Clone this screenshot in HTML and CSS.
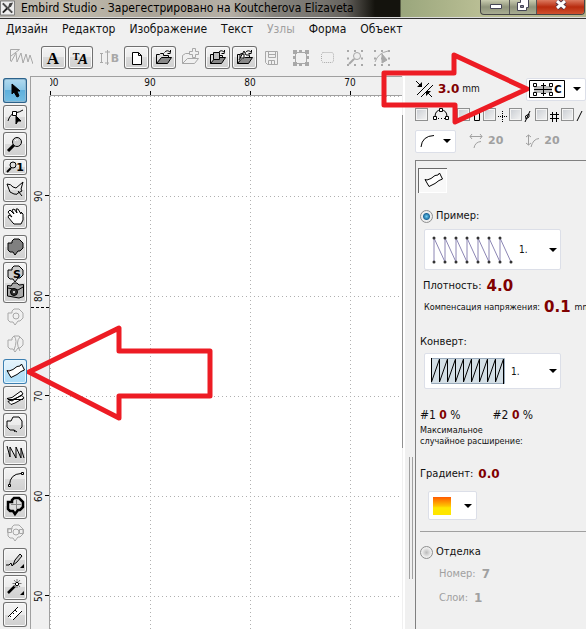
FILE: index.html
```html
<!DOCTYPE html>
<html lang="ru">
<head>
<meta charset="utf-8">
<title>Embird Studio</title>
<link rel="stylesheet" href="styles.css">
</head>
<body>
<svg class="defs" aria-hidden="true">
  <defs>
    <pattern id="dots" width="100" height="100" patternUnits="userSpaceOnUse">
      <path d="M0 .5H100M.5 0V100" stroke="#b0b0b0" stroke-dasharray="1 3" fill="none"/>
    </pattern>
    <linearGradient id="fire" x2="0" y2="1"><stop offset="0" stop-color="#ff5a00"/><stop offset=".5" stop-color="#ffc400"/><stop offset=".6" stop-color="#ffe600"/><stop offset="1" stop-color="#ffe600"/></linearGradient>
    <symbol id="blob" viewBox="0 0 24 25"><path d="M5 8H9V6L11 4H16L20 8V13L17 16H15L12 20L10 17H7L5 15Z"/></symbol>
    <symbol id="flag" viewBox="0 0 24 25"><path d="M4 11.500L6 12L10 10.500L14 7.500L17 7L18.500 5L21.500 11L18 12.500L14 15.500L11 17L8 18.500Z"/></symbol>
    <symbol id="folder" viewBox="0 0 25 23"><path d="M5.500 17.500V8.500H8.500L9.500 7.500H12.500V9.500H17.500V11.500" fill="#ddd"/><path d="M5.500 17.500L10.500 11.500H20.500L16.500 17.500Z" fill="#888"/><path d="M13.500 6.500Q16 3 19.500 6.500V4M19.500 7.500H16.500" fill="none"/></symbol>
    <symbol id="caret" viewBox="0 0 8 4"><path d="M0 0H8L4 4Z" fill="#000" stroke="none"/></symbol>
  </defs>
</svg>

<header class="titlebar">
  <svg class="logo" viewBox="0 0 16 16"><path fill="#eee" stroke="#777" d="M.5.5H15.500V15.500H.5Z"/><path d="M3 3L13 13M3 13L8 8" stroke="#222" stroke-width="2"/><path d="M8 9L10 3L14 2L12 6Z" fill="#444"/><path d="M3 3L13 13" stroke="#bbb" stroke-width=".6"/></svg>
  <h1>Embird Studio - Зарегестрировано на Koutcherova Elizaveta</h1>
  <div class="winbtns">
    <button class="min" aria-label="Minimize"><svg viewBox="0 0 28 15"><path d="M9.500 4.500H20.500V8.500H9.500Z" fill="#fff" stroke="#445"/></svg></button>
    <button class="max" aria-label="Restore"><svg viewBox="0 0 26 15"><path d="M10.500 -.5H18.500V7.500H16.500V10.500H7.500V2.500H10.500Z" fill="#fff" stroke="#445"/><path d="M10.500 5.500H13.500V7.500H10.500Z" fill="#889" stroke="#445"/></svg></button>
    <button class="close" aria-label="Close"><svg viewBox="0 0 47 15"><path d="M20 1L28 8M28 1L20 8" stroke="#534" stroke-width="5"/><path d="M20 1L28 8M28 1L20 8" stroke="#fff" stroke-width="3"/></svg></button>
  </div>
</header>

<nav class="menu">
  <button>Дизайн</button><button>Редактор</button><button>Изображение</button><button>Текст</button><button disabled>Узлы</button><button>Форма</button><button>Объект</button>
</nav>

<div class="toolbar" role="toolbar" aria-label="Файл">
  <button class="wide" disabled aria-label="Стежки"><svg viewBox="0 0 25 23"><path d="M2.500 15V3.500H11.500L3 10M3 16L8 7L9 16L13 7L15 17L18 8L20 16L22 9L25 18"/></svg></button>
  <div class="group">
    <button aria-label="Шрифт"><svg viewBox="0 0 25 23"><text class="serif" x="12" y="18" font-size="17">A</text></svg></button>
    <button aria-label="Надпись"><svg viewBox="0 0 25 23"><text class="serif" x="8" y="14" font-size="10">T</text><text class="serif ital" x="15" y="18" font-size="15">A</text></svg></button>
    <button disabled aria-label="Интервал"><svg viewBox="0 0 25 23"><path d="M6.500 7V17M5 7.500H8M5 16.500H8M12.500 4V19M10 6H15M10 17H14"/><text x="20" y="16" font-size="11">B</text></svg></button>
  </div>
  <div class="group">
    <button aria-label="Новый"><svg viewBox="0 0 25 23"><path d="M8.500 6.500H14.500L17.500 9.500V18.500H8.500ZM14.500 6.500V9.500H17.500" fill="#fff"/></svg></button>
    <button aria-label="Открыть"><svg viewBox="0 0 25 23"><use href="#folder"/></svg></button>
    <button disabled aria-label="Добавить"><svg viewBox="0 0 25 23"><path d="M4.500 17.500V9.500L7.500 7.500H11M4.500 17.500L9.500 12.500H20.500L16.500 17.500ZM14.500 2.500H17.500V5.500H20.500V8.500H17.500V11.500H14.500V8.500H11.500V5.500H14.500Z"/></svg></button>
    <button aria-label="Импорт"><svg viewBox="0 0 25 23"><use href="#folder"/><path d="M8.500 6.500H14.500V13.500H8.500Z" fill="#bbb"/></svg></button>
    <button aria-label="Импорт векторов"><svg viewBox="0 0 25 23"><use href="#folder"/><path d="M7 14L12 5L14 9H18M8 8H12V12H8Z" fill="#fff"/></svg></button>
    <button disabled aria-label="Сохранить"><svg viewBox="0 0 25 23"><path d="M6.500 5.500H18.500V18.500H8.500L6.500 16.500ZM9.500 5.500V11.500H16.500V5.500M9.500 18V14.500H15.500V18M12.500 15V18M9 8.500H16"/></svg></button>
  </div>
  <div class="group">
    <button disabled aria-label="Выделение"><svg viewBox="0 0 25 23"><path d="M7.500 6.500H18.500V17.500H7.500Z"/><path d="M5 4h4v4h-4ZM11 4h3v3h-3ZM17 4h4v4h-4ZM5 16h4v4h-4ZM11 17h3v3h-3ZM17 16h4v4h-4ZM5 10h3v3h-3ZM18 10h3v3h-3Z" class="solid" stroke="none"/></svg></button>
    <button disabled aria-label="Рамка"><svg viewBox="0 0 25 23"><rect x="6.500" y="6.500" width="12" height="10" rx="2" stroke-dasharray="1 1"/></svg></button>
    <button disabled aria-label="Масштаб"><svg viewBox="0 0 25 23"><path d="M5 12.500H21M5 5H21M5 19H21" stroke-width="2" stroke-dasharray="2 5"/><circle cx="15" cy="10" r="3.500" fill="#eee"/><path d="M12 13L7 18" stroke-width="2"/></svg></button>
    <button disabled aria-label="Узлы контура"><svg viewBox="0 0 25 23"><path d="M5 12.500H21M5 5H21M5 19H21" stroke-width="2" stroke-dasharray="2 5"/><path d="M6 16Q9 7 19 5"/><path d="M13 8V17L18 14Z" class="solid"/></svg></button>
  </div>
</div>

<main class="work">
  <div class="tools" role="toolbar" aria-label="Инструменты">
    <button class="on" aria-label="Выбор"><svg viewBox="0 0 24 25"><path d="M9 6V16L11 14L14 19L16 18L14 13H17Z" fill="#000"/></svg></button>
    <button aria-label="Правка узлов"><svg viewBox="0 0 24 25"><path d="M5 16Q7 9 12 8T20 5" /><path d="M9.500 6.500H13.500V10.500H9.500Z" fill="#fff"/><path d="M13 11V19L15 16H18Z" fill="#000"/></svg></button>
    <button aria-label="Лупа"><svg viewBox="0 0 24 25"><path d="M11 13L5 19" stroke-width="3"/><circle cx="14" cy="10" r="4.500" fill="#ccc"/><path d="M12 9Q13 7 15 8" stroke="#fff"/></svg></button>
    <button class="short" aria-label="Масштаб 1"><svg viewBox="0 0 24 16"><path d="M8 9L4 13" stroke-width="2"/><circle cx="10" cy="6" r="3" fill="#ddd"/><text x="17" y="12" font-size="11">1</text></svg></button>
    <button aria-label="Лассо"><svg viewBox="0 0 24 25"><path d="M4 7Q8 7 10 10L13 11L20 5L18 12L19 14L15 16Q15 18 11 17L7 15ZM15 14L19 19"/></svg></button>
    <button class="last" aria-label="Рука"><svg viewBox="0 0 24 25"><path d="M10 19L5 13L6 11L9 13L5 8L7 6L11 10L9 6L11 5L14 9L13 5L15 5L18 10L18 8L20 10V16L18 20H11Z" fill="#fff"/></svg></button>
    <button aria-label="Форма"><svg viewBox="0 0 24 25"><use href="#blob" fill="#808080"/></svg></button>
    <button class="tall" aria-label="Стиль и снимок"><svg viewBox="0 0 24 41"><use href="#blob" width="24" height="25" fill="#ccc"/><text x="14" y="16" font-size="11">S</text><path d="M4.500 23.500L8 24L10 21H14L16 23L20.500 22.500V34.500L16 36L4.500 34Z" fill="#aaa"/><path d="M5 26L15 28L20 25" /><circle cx="11" cy="30" r="3.500" fill="#333"/><circle cx="11" cy="30" r="1" fill="#fff" stroke="none"/></svg></button>
    <button disabled aria-label="Отверстие"><svg viewBox="0 0 24 25"><use href="#blob"/><circle cx="13" cy="11" r="3"/></svg></button>
    <button disabled aria-label="Разрез"><svg viewBox="0 0 24 25"><use href="#blob"/><path d="M11 4Q15 8 11 18M17 5Q12 10 17 19"/></svg></button>
    <button class="lit" aria-label="Столбик"><svg viewBox="0 0 24 25"><use href="#flag" fill="#fff"/></svg></button>
    <button aria-label="Столбик с проёмом"><svg viewBox="0 0 24 25"><path d="M4 12.500L9 11.500L18 5L20 8L9 15ZM8 18.500L12 17L21 12L19 9.500L5 15.500Z" fill="#fff"/><path d="M5 13.500H20"/></svg></button>
    <button aria-label="Контур"><svg viewBox="0 0 24 25"><path d="M12 19L11 17H7L4 14V8H8L10 4H16L19 8V14L17 16M11 17L14 19"/></svg></button>
    <button aria-label="Зигзаг"><svg viewBox="0 0 24 25"><path d="M4 6L7 17V7L13 18V7L18 18V8L21 18"/></svg></button>
    <button aria-label="Кривая"><svg viewBox="0 0 24 25"><path d="M6.500 18Q7 7 18 6.500"/><path d="M5.500 17.500h2v2h-2ZM18.500 5.500h2v2h-2Z" fill="#fff"/></svg></button>
    <button aria-label="Аппликация"><svg viewBox="0 0 24 25"><use href="#blob" fill="#ddd" stroke-width="2.500"/><path d="M8 10.500H18M13.500 6V16" stroke="#888"/></svg></button>
    <button disabled aria-label="Узор"><svg viewBox="0 0 24 25"><use href="#blob"/><circle cx="13" cy="11" r="3"/><path d="M4.500 7.500h4v4h-4ZM16.500 8.500h4v4h-4Z"/></svg></button>
    <button aria-label="Карандаш"><svg viewBox="0 0 24 25"><path d="M3 17H6L8 15L9 18L11 16"/><path d="M10 17L12 12L17 6L19 8L14 14Z" fill="#ccc"/><path d="M17 20H21V16Z" fill="#000" stroke="none"/></svg></button>
    <button aria-label="Волшебная палочка"><svg viewBox="0 0 24 25"><path d="M5 18L12 11" stroke-width="2.500"/><path d="M14 4V13M9.500 8.500H18.500M11 5L17 12M17 5L11 12" stroke="#777"/><path d="M12 9L14 7L16 9L14 11Z" fill="#fff"/><path d="M17 20H21V16Z" fill="#000" stroke="none"/></svg></button>
    <button aria-label="Линейка"><svg viewBox="0 0 24 25"><path d="M5 15L15 5L19 9L10 18Z" fill="#fff" stroke="none"/><path d="M5 15L15 5M10 18L19 9M7 14L8 15M10 11L11 12M12 8L14 10"/></svg></button>
  </div>

  <section class="stage" aria-label="Холст">
    <div class="corner"></div>
    <div class="ruler-x"><span>100</span><span>90</span><span>80</span><span>70</span></div>
    <div class="ruler-y"><span></span><span>90</span><span>80</span><span>70</span><span>60</span><span>50</span><i class="cursor"></i></div>
    <svg class="canvas"><rect width="100%" height="100%" fill="url(#dots)"/></svg>
  </section>

  <aside class="side">
    <div class="line width-line">
      <svg width="18" height="18" viewBox="0 0 18 18" class="ico"><path d="M2 15L14 3M6 17L18 5M1 1L6 6M17 17L12 12"/><path d="M7 7V2L2 7ZM11 11V16L16 11Z" fill="#000" stroke="none"/></svg>
      <b class="num">3.0</b><span class="unit">mm</span>
      <button class="box align" aria-haspopup="listbox" aria-label="Выравнивание"><svg width="36" height="18" viewBox="0 0 36 18" class="ico"><path d="M.5.5H35.500V17.500H.5Z" fill="#fff"/><path d="M5 6H23V13H5Z" fill="#bbb" stroke="none"/><path d="M5 9.500H23M14.500 3V16M12 5.500H17M12 13.500H17"/><path d="M4.500 3.500h3v3h-3ZM20.500 3.500h3v3h-3ZM4.500 12.500h3v3h-3ZM20.500 12.500h3v3h-3Z" fill="#fff"/><text x="29" y="13" font-size="10">C</text></svg><svg class="caret"><use href="#caret"/></svg></button>
    </div>
    <div class="checks">
      <label><input type="checkbox" aria-label="Дуга"><svg class="ico" width="18" height="14" viewBox="0 0 18 14"><path d="M3 9Q3 2 9 2T15 9" /><path d="M3 10.500H15" stroke-dasharray="1 2"/><path d="M1.500 8.500h3v3h-3ZM13.500 8.500h3v3h-3ZM7.500 .5h3v3h-3Z" fill="#fff"/></svg></label>
      <label><input type="checkbox" aria-label="Прямоугольник"><svg class="ico" width="9" height="14" viewBox="0 0 9 14"><path d="M2.500 4.500H7.500V12.500H2.500Z"/></svg></label>
      <label><input type="checkbox" aria-label="Оси"><svg class="ico" width="10" height="14" viewBox="0 0 10 14"><path d="M4.500 3V14M0 8.500H10" stroke-dasharray="1 1"/></svg></label>
      <label><input type="checkbox" aria-label="Касательная"><svg class="ico" width="7" height="14" viewBox="0 0 7 14"><path d="M1 14L6 3M1.500 8L5 6V9L2 11Z"/></svg></label>
      <label><input type="checkbox" aria-label="Сетка"><svg class="ico" width="9" height="14" viewBox="0 0 9 14"><path d="M2.500 4V14M6.500 4V14M0 6.500H9M0 10.500H9"/></svg></label>
      <label><input type="checkbox" aria-label="Линия"><svg class="ico" width="9" height="14" viewBox="0 0 9 14"><path d="M1 13L6 3"/></svg></label>
    </div>
    <div class="line corner-line">
      <button class="box curve" aria-haspopup="listbox" aria-label="Кривая"><svg class="ico" width="15" height="14" viewBox="0 0 15 14"><path d="M1 13Q2 2 14 1.500"/></svg><svg class="caret"><use href="#caret"/></svg></button>
      <svg class="ico dim" width="14" height="16" viewBox="0 0 14 16"><path d="M1 3.500H13M3 1L1 3.500L3 6M11 1L13 3.500L11 6M5 15Q6 9 12 8.500"/></svg><b class="dimnum first">20</b>
      <svg class="ico dim" width="14" height="16" viewBox="0 0 14 16"><path d="M3.500 2V12M1 4L3.500 2L6 4M1 10L3.500 12L6 10M6 14Q8 6 14 5.500"/></svg><b class="dimnum">20</b>
    </div>

    <div class="lower">
      <div class="grip"></div>
      <form class="panel">
        <button type="button" class="toggle" aria-pressed="true" aria-label="Столбик"><svg class="ico" width="24" height="25" viewBox="0 0 24 25"><use href="#flag" fill="#fff"/></svg></button>
        <label class="row sample"><input type="radio" name="mode" checked>Пример:</label>
        <div class="combo stitch">
          <select aria-label="Пример"><option>1.</option></select>
          <svg class="ico" width="82" height="30" viewBox="0 0 82 30"><path d="M3 27V3L14 27V3L25 27V3L36 27V3L47 27V3L58 27V3L69 27V3L80 27" stroke="#8c86b4"/><path d="M3 27h0M3 3h0M14 27h0M14 3h0M25 27h0M25 3h0M36 27h0M36 3h0M47 27h0M47 3h0M58 27h0M58 3h0M69 27h0M69 3h0M80 27h0" stroke="#333" stroke-width="3" stroke-linecap="round"/></svg>
          <svg class="caret"><use href="#caret"/></svg>
        </div>
        <div class="row density">Плотность:<b class="num big">4.0</b></div>
        <div class="row comp"><small>Компенсация напряжения:</small><b class="num big">0.1</b><small>mm</small></div>
        <label class="row envelope" for="env">Конверт:</label>
        <div class="combo env">
          <select id="env"><option>1.</option></select>
          <svg class="ico" width="74" height="26" viewBox="0 0 74 26"><path d="M.5.5H73.500V25.500H.5Z" fill="#d4dfe6" stroke="#9ab"/><path d="M.5 0V24L8.500 1V24L16.500 1V24L24.500 1V24L32.500 1V24L40.500 1V24L48.500 1V24L56.500 1V24L64.500 1V24L72.500 1V26"/></svg>
          <svg class="caret"><use href="#caret"/></svg>
        </div>
        <div class="row percent"><span>#1 <b>0</b> %</span><span>#2 <b>0</b> %</span></div>
        <p class="note">Максимальное<br>случайное расширение:</p>
        <div class="row gradient">Градиент:<b class="num">0.0</b></div>
        <button type="button" class="box fill" aria-haspopup="listbox" aria-label="Градиент"><svg width="18" height="18" viewBox="0 0 18 18"><rect width="18" height="18" fill="url(#fire)"/></svg><svg class="caret"><use href="#caret"/></svg></button>
        <hr>
        <label class="row finish"><input type="radio" name="mode">Отделка</label>
        <div class="row off">Номер:<b>7</b></div>
        <div class="row off">Слои:<b>1</b></div>
      </form>
    </div>
  </aside>
</main>

<svg class="callout to-tool" width="186" height="100" viewBox="0 0 186 100"><path d="M2 49L92 5V28H183V73H92V95Z"/></svg>
<svg class="callout to-align" width="148" height="74" viewBox="0 0 148 74"><path d="M3 22H73V4L146 38L74 71V54H3Z"/></svg>
</body>
</html>
```

FILE: styles.css
```css
* { box-sizing: border-box; }

body {
  margin: 0;
  height: 100vh;
  display: flex;
  flex-direction: column;
  position: relative;
  overflow: hidden;
  background: #f0f0f0;
  color: #111;
  font: 11px/20px "DejaVu Sans Condensed", "DejaVu Sans", sans-serif;
}

button {
  padding: 0;
  border: 0;
  background: none;
  color: inherit;
  font: inherit;
}

svg { display: block; flex: none; }
svg text { font-weight: bold; text-anchor: middle; fill: #000; stroke: none; font-family: "DejaVu Sans", sans-serif; }
svg .serif { font-family: "Liberation Serif", serif; }
svg .ital { font-style: italic; }
.defs { position: absolute; width: 0; height: 0; }
.ico { fill: none; stroke: #000; }

/* Title bar */
.titlebar {
  flex: none;
  display: flex;
  height: 19px;
  background: linear-gradient(90deg, #b5b2ab 0, #c4beb0 60px, #aaa498 150px, #b6b0a6 230px, #85827c 275px, #77746f 320px, #66635e 345px, #14130d 375px, #14130d 400px, #9aa67c 401px, #b9be94 480px, #b6b58d 100%);
  border-bottom: 1px solid #333;
  box-shadow: inset 0 -1px #ddd;
}
.logo { width: 15px; height: 16px; }
h1 { flex: 1; margin: 0 0 0 6px; font-size: 12px; line-height: 16px; font-weight: normal; color: #000; white-space: nowrap; }
.winbtns {
  display: flex;
  height: 15px;
  margin-right: 1px;
  border: 1px solid #444;
  border-top: 0;
  border-radius: 0 0 4px 4px;
  overflow: hidden;
  background: linear-gradient(#c9ccb0, #8e937a 50%, #a9ad92);
}
.winbtns svg { height: 15px; }
.min svg { width: 28px; }
.max svg { width: 26px; }
.close svg { width: 47px; }
.max { border: solid #555; border-width: 0 1px; }
.close { background: linear-gradient(#dc7a60, #b82b0e 50%, #d0512f); }

/* Menu */
.menu { flex: none; display: flex; align-items: flex-start; gap: 14px; height: 23px; padding: 0 6px; }
.menu button { font-size: 12px; line-height: 20px; }
.menu button:disabled { color: #a0a0a0; }

/* Top toolbar */
.toolbar { flex: none; display: flex; gap: 4px; height: 34px; padding: 4px 8px 0; }
.group { display: flex; gap: 2px; }
.wide { margin-right: 4px; }
.toolbar svg { width: 25px; height: 23px; }
.toolbar button, .tools button {
  border-radius: 3px;
  background: linear-gradient(#f4f4f4, #ebebeb 50%, #dadada 50%, #cfcfcf);
  box-shadow: inset 0 0 0 1px #707070, inset 0 0 0 2px #fafafa;
}
.toolbar button { height: 23px; }
.toolbar svg, .tools svg { fill: none; stroke: #000; }
.toolbar button:disabled, .tools button:disabled { background: none; box-shadow: none; }
.toolbar button:disabled svg, .tools button:disabled svg { stroke: #a8a8a8; }
button:disabled text, button:disabled .solid { fill: #a8a8a8; }

/* Work area */
.work { flex: 1; min-height: 0; display: grid; grid-template-columns: 30px minmax(0, 1fr) 184px; }
.tools { display: flex; flex-direction: column; gap: 2px; padding: 2px 3px; }
.tools button { flex: none; width: 24px; height: 25px; }
.tools svg { width: 24px; height: 25px; }
.tools .short, .tools .short svg { height: 16px; }
.tools .tall, .tools .tall svg { height: 41px; }
.tools .last { margin-bottom: 4px; }
.tools .on { background: linear-gradient(#b5dcf0, #8ac6e6 50%, #5fb0dc 50%, #74bfe4); box-shadow: inset 0 0 0 1px #2c628b, inset 0 0 0 2px #8fb9d2; }
.tools .lit { background: linear-gradient(#e6f4fc, #d6edfa 50%, #bbe2f8 50%, #abdcf7); box-shadow: inset 0 0 0 1px #3c7fb1, inset 0 0 0 2px #e8f6fd; }

/* Canvas and rulers */
.stage {
  display: grid;
  grid-template: 19px minmax(0, 1fr) / 19px minmax(0, 1fr);
  border: solid #a0a0a0;
  border-width: 1px 0 0 1px;
  min-height: 0;
  font-size: 10px;
  line-height: 12px;
}
.ruler-x { display: flex; overflow: hidden; border-bottom: 1px solid #a0a0a0; }
.ruler-x span {
  flex: none;
  width: 100px;
  height: 18px;
  background: linear-gradient(#000, #000) 50% 100% / 1px 4px no-repeat;
  text-align: center;
}
.ruler-x span:first-child { margin-left: -50px; }
.ruler-y { position: relative; overflow: hidden; border-right: 1px solid #a0a0a0; }
.ruler-y span {
  display: block;
  height: 100px;
  writing-mode: vertical-rl;
  transform: rotate(180deg);
  width: 18px;
  padding-right: 2px;
  text-align: center;
  background: linear-gradient(#000, #000) 0 50% / 4px 1px no-repeat;
}
.ruler-y span:first-child { margin-top: -50px; }
.cursor { position: absolute; left: 0; right: 0; top: 211px; border-top: 1px dashed #000; }
.canvas { width: 100%; height: 100%; background: #fff; }

/* Settings column */
.side {
  display: flex;
  flex-direction: column;
  min-height: 0;
  overflow: hidden;
  white-space: nowrap;
  background:
    linear-gradient(#909090, #909090) 0 39px / 1px 333px no-repeat,
    linear-gradient(#fff, #fff) 1px 0 / 2px 100% no-repeat;
}
.line { flex: none; display: flex; align-items: center; padding-left: 13px; }
.num { color: #800000; font: bold 12px/20px "DejaVu Sans", sans-serif; }
.big { font-size: 15px; }
.width-line { height: 24px; margin-top: 1px; }
.width-line .num { margin-left: 5px; }
.unit { margin-left: 3px; font-size: 10px; }
.box { display: flex; align-items: center; background: #fff; border: 1px solid #dcdfe8; border-radius: 2px; }
.caret { width: 8px; height: 4px; }
.align { height: 23px; margin-left: auto; padding: 0 4px 0 2px; gap: 8px; }

.checks { flex: none; display: flex; gap: 3px; padding: 7px 0 0 13px; height: 28px; }
.checks label { display: flex; gap: 2px; width: 23px; flex: none; }
.checks label:first-child { width: 39px; gap: 4px; }
.checks input {
  flex: none;
  appearance: none;
  width: 13px;
  height: 13px;
  margin: 0;
  border: 1px solid #8e8f8f;
  background: linear-gradient(135deg, #c8ccd2, #f4f4f4);
  box-shadow: inset 0 0 0 1px #f4f4f4;
}
.corner-line { height: 24px; }
.curve { width: 41px; height: 23px; padding: 0 4px; justify-content: space-between; margin-right: 13px; }
.dim { stroke: #a0a0a0; }
.dimnum { margin-left: 5px; color: #a0a0a0; font: bold 11px/20px "DejaVu Sans", sans-serif; }
.first { margin-right: 22px; }

.lower { flex: 1; min-height: 0; display: flex; margin-top: 7px; }
.grip { flex: none; width: 4px; height: 122px; margin: 297px 2px 0 7px; border: solid #a0a0a0; border-width: 0 1px; }
.panel {
  flex: 1;
  min-width: 0;
  display: flex;
  flex-direction: column;
  align-items: flex-start;
  border: solid #808080;
  border-width: 1px 0 0 1px;
  padding-left: 4px;
}
.row { display: flex; align-items: center; height: 20px; }
.row input {
  appearance: none;
  width: 13px;
  height: 13px;
  margin: 0 3px 0 0;
  border: 1px solid #8e8f8f;
  border-radius: 50%;
  background: radial-gradient(circle, #bbb, #eee 60%);
}
.row input:checked { background: radial-gradient(circle, #6fd0f5 0, #1e6a9c 3px, #eee 4px); }
.toggle { width: 29px; height: 25px; margin: 7px 0 0 -2px; padding-left: 3px; background: #f8f8f8; box-shadow: inset 1px 1px #696969, inset -1px -1px #fff; }
.sample { margin-top: 13px; }
.combo { display: grid; align-items: center; width: 137px; margin-left: 4px; }
.combo > * { grid-area: 1 / 1; }
.combo svg { pointer-events: none; margin-left: 7px; }
.combo .caret { justify-self: end; margin: 0 4px 0 0; }
.combo select {
  appearance: none;
  width: 100%;
  height: 100%;
  margin: 0;
  padding: 0 0 0 94px;
  border: 1px solid #dcdfe8;
  border-radius: 2px;
  background: #fff;
  color: #111;
  font: 10px "DejaVu Sans Condensed", "DejaVu Sans", sans-serif;
}
.stitch { height: 41px; margin-top: 3px; }
.combo.env select { padding-left: 86px; }
.env { height: 36px; margin-top: 1px; }
.density { margin: 6px 0 0 3px; gap: 5px; }
.comp { margin: 1px 0 0 4px; gap: 4px; }
small { font-size: 9px; }
.envelope { margin-top: 15px; }
.percent { margin-top: 16px; gap: 32px; font-size: 12px; }
.percent b { color: #800000; }
.note { margin: 0; font-size: 9px; line-height: 11px; }
.gradient { margin-top: 17px; gap: 5px; }
.fill { width: 49px; height: 29px; margin: 7px 0 0 8px; padding: 0 4px; justify-content: space-between; }
hr { width: 100%; margin: 11px 0 0; border: 0; border-top: 1px solid #a0a0a0; }
.finish { margin-top: 10px; }
.off { margin: 2px 0 2px 19px; gap: 6px; color: #a0a0a0; }
.off b { font: bold 12px/20px "DejaVu Sans", sans-serif; }

/* Red pointers drawn over the window */
.callout { position: absolute; fill: none; stroke: #ed1c24; stroke-width: 5; stroke-linejoin: round; pointer-events: none; }
.to-tool { left: 27px; top: 323px; }
.to-align { right: 57px; top: 51px; }
```
